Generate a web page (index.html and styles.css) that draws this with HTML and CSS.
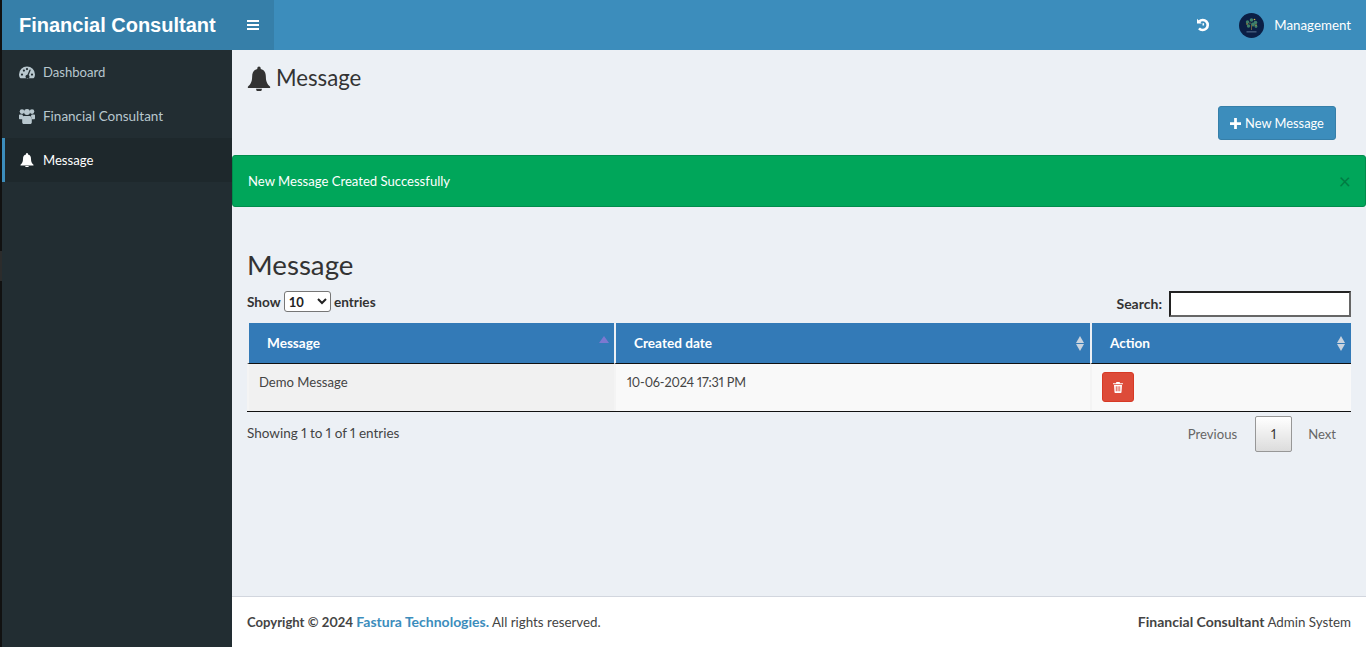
FILE: index.html
```html
<!DOCTYPE html>
<html lang="en">
<head>
<meta charset="utf-8">
<title>Message</title>
<link rel="stylesheet" href="styles.css">
</head>
<body>
<div class="edge"><span class="edge-mark"></span></div>
<div class="app">
  <header class="topbar">
    <a class="logo">Financial Consultant</a>
    <a class="toggle">
      <svg class="ico-bars" viewBox="0 0 12 10"><path d="M0 0h12v2H0zM0 4h12v2H0zM0 8h12v2H0z"/></svg>
    </a>
    <div class="top-right">
      <svg class="ico-history" viewBox="0 0 14 14"><path d="M1 .7 5.800 5.500H1z"/><path class="history-arc" d="M3.200 3.400A5 5 0 1 1 3 10.300"/><path d="M6.500 5.200h1.600v2.300h-1.600z"/></svg>
      <svg class="avatar" viewBox="0 0 25 25">
        <circle cx="12.500" cy="12.500" r="12.500" fill="#0b1f45"/>
        <g fill="#3f7f6a"><circle cx="8.500" cy="9" r="1.700"/><circle cx="12.500" cy="7" r="1.800"/><circle cx="16.500" cy="9.500" r="1.800"/><circle cx="9.500" cy="13" r="1.700"/><circle cx="14" cy="11.500" r="2"/><circle cx="17" cy="13.500" r="1.400"/></g>
        <g fill="#d9b63c"><circle cx="15.500" cy="6.500" r=".8"/><circle cx="8" cy="11" r=".7"/><circle cx="17" cy="12" r=".7"/><circle cx="11" cy="10" r=".6"/></g>
        <path d="M12 12h1v5h-1z" fill="#6d5a3a"/>
        <path d="M7.500 18.500h10v.8h-10z" fill="#6f8aa8"/>
      </svg>
      <span class="user-name">Management</span>
    </div>
  </header>
  <div class="body-row">
    <nav class="sidebar">
      <a class="nav-item">
        <svg class="nav-ico" viewBox="0 0 16 14"><path fill-rule="evenodd" d="M8 1.500a8 8 0 0 0-8 8c0 1.300.3 2.400.9 3.300.2.300.4.400.7.400h12.800c.3 0 .5-.1.7-.4.600-.9.900-2 .9-3.300a8 8 0 0 0-8-8zM3 8.500a1.100 1.100 0 1 1 0 2.200 1.100 1.100 0 0 1 0-2.200zm1.900-4a1.100 1.100 0 1 1 0 2.200 1.100 1.100 0 0 1 0-2.200zM8 3A1.100 1.100 0 1 1 8 5.200 1.100 1.100 0 0 1 8 3zm3.600 2.400-1.900 4.700a2 2 0 1 1-1.300-.4l2-4.800a.65.65 0 0 1 1.200.5zM13 8.500a1.100 1.100 0 1 1 0 2.200 1.100 1.100 0 0 1 0-2.200z"/></svg>
        <span>Dashboard</span>
      </a>
      <a class="nav-item">
        <svg class="nav-ico nav-ico-users" viewBox="0 0 16 15"><circle cx="3" cy="2.600" r="2.300"/><circle cx="13" cy="2.600" r="2.300"/><circle cx="8" cy="3" r="3"/><path d="M0 6.500c0-.6.400-1 1-1h2.300c.3.800.7 1.400 1.300 1.900-.8.500-1.300 1.500-1.300 2.900H1c-.6 0-1-.4-1-1zM16 6.500c0-.6-.4-1-1-1h-2.300c-.3.800-.7 1.400-1.300 1.900.8.500 1.300 1.500 1.300 2.900H15c.6 0 1-.4 1-1zM5.200 7h5.600c1.200 0 2 1.200 2 3v3.200c0 1-.7 1.800-1.700 1.800H4.900c-1 0-1.700-.8-1.700-1.800V10c0-1.800.8-3 2-3z"/></svg>
        <span class="nav-wide">Financial Consultant</span>
      </a>
      <a class="nav-item nav-active">
        <svg class="nav-ico nav-ico-bell" viewBox="0 0 14 14"><path d="M7 0a1 1 0 0 0-1 1v.5C3.800 2 3 3.600 3 6c0 3-1 4.500-2.500 5.800V12.500h13v-.7C12 10.500 11 9 11 6c0-2.400-.8-4-3-4.500V1a1 1 0 0 0-1-1zM5.300 13a1.700 1.700 0 0 0 3.400 0z"/></svg>
        <span>Message</span>
      </a>
    </nav>
    <main class="content">
      <div class="page-head">
        <h1 class="page-title">
          <svg class="title-bell" viewBox="0 0 14 14"><path d="M7 0a1 1 0 0 0-1 1v.5C3.800 2 3 3.600 3 6c0 3-1 4.500-2.500 5.800V12.500h13v-.7C12 10.500 11 9 11 6c0-2.400-.8-4-3-4.500V1a1 1 0 0 0-1-1zM5.300 13a1.700 1.700 0 0 0 3.400 0z"/></svg>
          <span>Message</span>
        </h1>
      </div>
      <div class="actions">
        <a class="btn-new">
          <svg class="ico-plus" viewBox="0 0 12 12"><path d="M4.500 0h3v4.500H12v3H7.500V12h-3V7.500H0v-3h4.500z"/></svg>
          <span>New Message</span>
        </a>
      </div>
      <div class="alert">
        <span>New Message Created Successfully</span>
        <span class="alert-close">×</span>
      </div>
      <section class="panel">
        <h2 class="panel-title">Message</h2>
        <div class="dt-top">
          <label class="dt-length">Show
            <select class="dt-select"><option>10</option><option>25</option></select>
            entries</label>
          <label class="dt-search">Search: <input class="dt-input" type="text"></label>
        </div>
        <table class="dt">
          <thead>
            <tr>
              <th class="col-a">Message<span class="sort-up"></span></th>
              <th class="col-b">Created date<span class="sort"></span></th>
              <th class="col-c">Action<span class="sort"></span></th>
            </tr>
          </thead>
          <tbody>
            <tr>
              <td class="cell-sorted">Demo Message</td>
              <td class="cell-date">10-06-2024 17:31 PM</td>
              <td><a class="btn-del"><svg class="ico-trash" viewBox="0 0 10 11"><path fill-rule="evenodd" d="M3.400 0h3.200l.5 1.200H10v1H0v-1h2.900zM1 3h8l-.5 7.200c0 .5-.4.8-.8.8H2.300c-.4 0-.8-.3-.8-.8zm1.800 1.200v5h.9v-5zm1.800 0v5h.9v-5zm1.800 0v5h.8v-5z"/></svg></a></td>
            </tr>
          </tbody>
        </table>
        <div class="dt-bottom">
          <div class="dt-info">Showing 1 to 1 of 1 entries</div>
          <div class="dt-pages">
            <a class="page-link">Previous</a>
            <a class="page-current">1</a>
            <a class="page-link">Next</a>
          </div>
        </div>
      </section>
      <footer class="footer">
        <div><b class="foot-copy">Copyright © 2024 <a class="foot-link">Fastura Technologies.</a></b> All rights reserved.</div>
        <div><b class="foot-brand">Financial Consultant</b> Admin System</div>
      </footer>
    </main>
  </div>
</div>
</body>
</html>
```

FILE: styles.css
```css
* { box-sizing: border-box; }
html, body { height: 100%; }
body {
  margin: 0;
  display: flex;
  height: 647px;
  overflow: hidden;
  font-family: "Lato", "Noto Sans", sans-serif;
  font-size: 13.1px;
  line-height: 20px;
  color: #333;
  background: #ecf0f5;
  font-variant-numeric: proportional-nums;
}
b, th, label { font-size: 13.6px; }
.edge { width: 2px; background: #111; flex: none; padding-top: 251px; }
.edge-mark { display: block; height: 30px; background: #2c2c2c; }
.app { flex: 1; display: flex; flex-direction: column; min-width: 0; }

.topbar { height: 50px; flex: none; display: flex; align-items: center; background: #3c8dbc; color: #fff; }
.logo {
  width: 230px; height: 50px; line-height: 50px; padding-left: 17px;
  font-family: "Liberation Sans", Arial, sans-serif; font-size: 20px; font-weight: 700;
  background: #367fa9; white-space: nowrap;
}
.toggle { width: 42px; height: 50px; background: #367fa9; display: flex; align-items: center; justify-content: center; }
.ico-bars { width: 12px; height: 10px; fill: #fff; }
.top-right { margin-left: auto; display: flex; align-items: center; padding-right: 15px; }
.ico-history { width: 14px; height: 14px; fill: #fff; margin-right: 29px; }
.history-arc { fill: none; stroke: #fff; stroke-width: 2.600; }
.avatar { width: 25px; height: 25px; margin-right: 10px; }
.user-name { font-size: 13.3px; }

.body-row { flex: 1; display: flex; min-height: 0; }
.sidebar { width: 230px; flex: none; background: #222d32; }
.nav-item { display: flex; align-items: center; height: 44px; padding-left: 17px; color: #b8c7ce; }
.nav-wide { font-size: 13.5px; }
.nav-active { background: #1e282c; color: #fff; border-left: 3px solid #3c8dbc; padding-left: 14px; }
.nav-ico { width: 16px; height: 14px; fill: #b8c7ce; margin-right: 8px; flex: none; }
.nav-active .nav-ico { fill: #fff; }
.nav-ico-users { height: 15px; }
.nav-ico-bell { width: 14px; margin: 0 9px 0 1px; }

.content { flex: 1; min-width: 0; display: flex; flex-direction: column; }
.page-head { height: 56px; padding: 15px 15px 0; }
.page-title { margin: 0; font-size: 22.2px; font-weight: 400; line-height: 26px; display: flex; align-items: center; gap: 5px; }
.title-bell { width: 24px; height: 25px; fill: #333; }
.actions { height: 49px; display: flex; justify-content: flex-end; padding-right: 30px; }
.btn-new {
  width: 118px; height: 34px; display: flex; align-items: center; justify-content: center; gap: 4px;
  font-size: 12.85px; background: #3c8dbc; border: 1px solid #367fa9; border-radius: 3px; color: #fff;
}
.ico-plus { width: 11px; height: 11px; fill: #fff; }
.alert {
  height: 52px; display: flex; align-items: center; justify-content: space-between;
  padding: 0 14px 0 15px; background: #00a65a; border: 1px solid #008d4c; border-radius: 3px; color: #fff;
}
.alert-close { color: #000; opacity: .25; font-size: 21px; font-weight: 400; }

.panel { flex: 1; padding: 40px 15px 0; min-height: 0; }
.panel-title { margin: 0; font-size: 27.7px; font-weight: 400; line-height: 36px; }
.dt-top { display: flex; justify-content: space-between; align-items: flex-end; height: 34px; margin-bottom: 6px; }
.dt-length { font-weight: 700; align-self: flex-start; padding-top: 8px; }
.dt-select { width: 47px; height: 21px; font: 700 13px "Lato", sans-serif; background: #fff; border: 1px solid #767676; border-radius: 3px; color: #222; }
.dt-search { font-size: 14px; font-weight: 700; display: flex; align-items: center; gap: 7px; }
.dt-input { width: 182px; height: 26px; border: 2px solid; border-color: #222 #666 #666 #222; background: #fff; }

.dt { width: 100%; border-collapse: separate; border-spacing: 0; table-layout: fixed; border-bottom: 1px solid #111; }
.dt th {
  position: relative; height: 41px; padding: 0 18px; text-align: left; font-weight: 700; color: #fff;
  background: #337ab7; border-bottom: 1px solid #111; border-left: 2px solid #ecf0f5;
}
.col-a { width: 367px; }
.col-b { width: 476px; }
.sort-up, .sort { position: absolute; right: 5px; }
.sort-up { top: 13px; border: 5px solid transparent; border-top: 0; border-bottom: 7px solid #7c78d0; }
.sort { top: 13px; width: 9px; height: 15px; }
.sort::before, .sort::after { content: ""; position: absolute; left: 0; border: 4.5px solid transparent; }
.sort::before { top: 0; border-top: 0; border-bottom: 7px solid #c9d3de; }
.sort::after { bottom: 0; border-bottom: 0; border-top: 7px solid #c9d3de; }
.dt td { height: 47px; padding: 8px 10px; vertical-align: top; color: #444; background: #f9f9f9; border-left: 2px solid #f4f4f4; }
.dt td.cell-sorted { background: #f1f1f1; }
.dt td.cell-date { font-size: 12.7px; letter-spacing: -.15px; padding-left: 11px; }
.btn-del {
  display: flex; align-items: center; justify-content: center; width: 32px; height: 30px;
  background: #dd4b39; border: 1px solid #d73925; border-radius: 3px;
}
.ico-trash { width: 10px; height: 11px; fill: #fff; }

.dt-bottom { display: flex; justify-content: space-between; margin-top: 4px; }
.dt-info { padding-top: 7px; font-size: 13.5px; color: #444; }
.dt-pages { display: flex; align-items: center; }
.page-link { padding: 0 15px; color: #666; }
.page-current {
  width: 37px; height: 36px; display: flex; align-items: center; justify-content: center; margin: 0 1px 0 3px;
  border: 1px solid #979797; border-radius: 2px; background: linear-gradient(#fff, #dcdcdc);
}

.footer {
  height: 51px; flex: none; display: flex; justify-content: space-between; align-items: center;
  padding: 0 15px; font-size: 13.35px; background: #fff; border-top: 1px solid #d2d6de; color: #444;
}
.foot-copy { font-size: 13.1px; }
.foot-link { color: #3c8dbc; font-size: 14px; }
.foot-brand { font-size: 14px; }
```
